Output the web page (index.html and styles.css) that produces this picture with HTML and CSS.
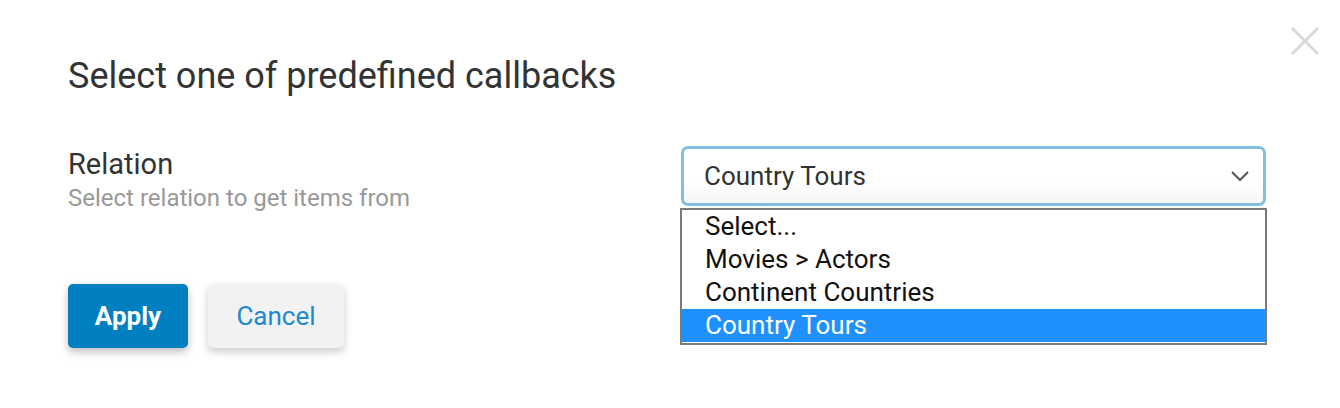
FILE: index.html
```html
<!DOCTYPE html>
<html>
<head>
<meta charset="utf-8">
<link rel="stylesheet" href="styles.css">
</head>
<body>
<div class="dialog">
  <button class="close" aria-label="Close">
    <svg width="30" height="30" viewBox="0 0 30 30"><path d="M2 2 L28 28 M28 2 L2 28" stroke="#d9d9d9" stroke-width="3" fill="none"/></svg>
  </button>
  <h1 class="title">Select one of predefined callbacks</h1>
  <div class="field">
    <div class="label-col">
      <div class="label">Relation</div>
      <div class="hint">Select relation to get items from</div>
    </div>
    <div class="select-wrap">
      <div class="select">
        <span class="value">Country Tours</span>
        <svg class="chevron" width="20" height="12" viewBox="0 0 20 12"><path d="M2 2 L10 10 L18 2" stroke="#555" stroke-width="2" fill="none"/></svg>
      </div>
      <ul class="options">
        <li>Select...</li>
        <li>Movies &gt; Actors</li>
        <li>Continent Countries</li>
        <li class="active">Country Tours</li>
      </ul>
    </div>
  </div>
  <div class="actions">
    <button class="btn btn-primary">Apply</button>
    <button class="btn btn-secondary">Cancel</button>
  </div>
</div>
</body>
</html>
```

FILE: styles.css
```css
* { box-sizing: border-box; }
html, body { margin: 0; padding: 0; background: #fff; }
body { font-family: Roboto, "Liberation Sans", sans-serif; width: 1340px; height: 408px; overflow: hidden; }
.dialog { position: relative; padding: 54px 74px 0 68px; }
.close { position: absolute; top: 26px; right: 20px; border: 0; background: none; padding: 0; width: 30px; height: 30px; }
.close svg { display: block; }
.title { margin: 0; font-weight: 400; font-size: 36px; line-height: 44px; color: #333; }
.field { display: flex; justify-content: space-between; margin-top: 49px; }
.label { font-size: 29px; line-height: 34px; color: #333; }
.hint { font-size: 24px; line-height: 28px; color: #999; margin-top: 3px; }
.select-wrap { position: relative; width: 585px; margin-top: -1px; }
.select { height: 60px; border: 3px solid #80bfdf; border-radius: 7px; display: flex; align-items: center; justify-content: space-between; padding: 0 13px 0 20px; background: linear-gradient(#fff 60%, #f6f6f6); }
.value { font-size: 26px; color: #333; }
.options { position: absolute; left: -1px; top: 62px; width: 587px; margin: 0; padding: 0 0 1px 0; list-style: none; background: #fff; border: 2px solid #7a7a7a; }
.options li { font-size: 26px; line-height: 33px; height: 33px; padding-left: 23px; color: #111; }
.options li.active { background: #1e90ff; color: #fff; }
.actions { display: flex; gap: 20px; margin-top: 72px; }
.btn { height: 64px; border: 0; border-radius: 5px; font-family: Roboto, "Liberation Sans", sans-serif; font-size: 26px; padding: 0; }
.btn-primary { width: 120px; background: #0080c0; color: #fff; font-weight: 700; box-shadow: 0 4px 8px rgba(0,0,0,0.25); }
.btn-secondary { width: 136px; background: #f2f2f2; color: #2088cc; box-shadow: 0 4px 8px rgba(0,0,0,0.2); }
```
